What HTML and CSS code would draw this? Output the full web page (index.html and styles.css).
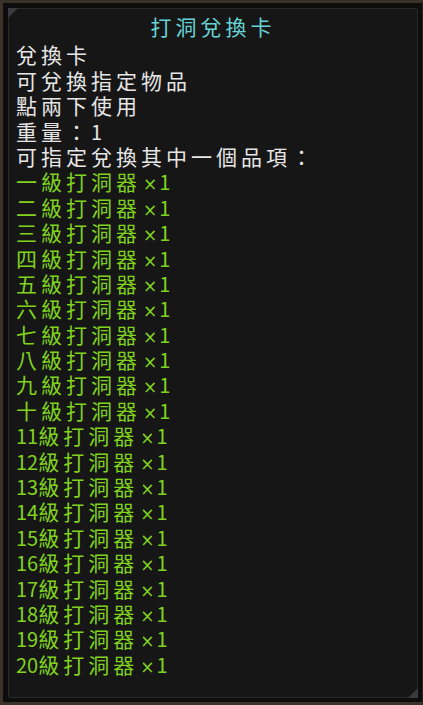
FILE: index.html
```html
<!DOCTYPE html>
<html lang="zh-Hant">
<head>
<meta charset="utf-8">
<title>打洞兌換卡</title>
<link rel="stylesheet" href="styles.css">
</head>
<body>
<div class="frame">
  <div class="gap">
    <div class="panel">
      <div class="title">打洞兌換卡</div>
      <div class="line">兌換卡</div>
      <div class="line">可兌換指定物品</div>
      <div class="line">點兩下使用</div>
      <div class="line">重量：<span class="n">1</span></div>
      <div class="line">可指定兌換其中一個品項：</div>
      <div class="line g">一級打洞器<span class="x">×</span><span class="n">1</span></div>
      <div class="line g">二級打洞器<span class="x">×</span><span class="n">1</span></div>
      <div class="line g">三級打洞器<span class="x">×</span><span class="n">1</span></div>
      <div class="line g">四級打洞器<span class="x">×</span><span class="n">1</span></div>
      <div class="line g">五級打洞器<span class="x">×</span><span class="n">1</span></div>
      <div class="line g">六級打洞器<span class="x">×</span><span class="n">1</span></div>
      <div class="line g">七級打洞器<span class="x">×</span><span class="n">1</span></div>
      <div class="line g">八級打洞器<span class="x">×</span><span class="n">1</span></div>
      <div class="line g">九級打洞器<span class="x">×</span><span class="n">1</span></div>
      <div class="line g">十級打洞器<span class="x">×</span><span class="n">1</span></div>
      <div class="line g"><span class="n">11</span>級打洞器<span class="x">×</span><span class="n">1</span></div>
      <div class="line g"><span class="n">12</span>級打洞器<span class="x">×</span><span class="n">1</span></div>
      <div class="line g"><span class="n">13</span>級打洞器<span class="x">×</span><span class="n">1</span></div>
      <div class="line g"><span class="n">14</span>級打洞器<span class="x">×</span><span class="n">1</span></div>
      <div class="line g"><span class="n">15</span>級打洞器<span class="x">×</span><span class="n">1</span></div>
      <div class="line g"><span class="n">16</span>級打洞器<span class="x">×</span><span class="n">1</span></div>
      <div class="line g"><span class="n">17</span>級打洞器<span class="x">×</span><span class="n">1</span></div>
      <div class="line g"><span class="n">18</span>級打洞器<span class="x">×</span><span class="n">1</span></div>
      <div class="line g"><span class="n">19</span>級打洞器<span class="x">×</span><span class="n">1</span></div>
      <div class="line g"><span class="n">20</span>級打洞器<span class="x">×</span><span class="n">1</span></div>
    </div>
  </div>
</div>
</body>
</html>
```

FILE: styles.css
```css
html, body {
  margin: 0;
  padding: 0;
  background: #0e0d0c;
}
body {
  width: 423px;
  height: 705px;
  overflow: hidden;
  font-family: "Noto Sans CJK TC", "Noto Sans CJK SC", sans-serif;
}
.frame {
  box-sizing: border-box;
  width: 423px;
  height: 705px;
  border-top: 3px solid #3a3128;
  border-left: 3px solid #3d3329;
  border-bottom: 3px solid #3a3128;
  border-right: 1px solid #2a241e;
}
.gap {
  box-sizing: border-box;
  height: 100%;
  padding: 5px 4px 4px 5px;
  background: #0d0d0d;
}
.panel {
  position: relative;
  box-sizing: border-box;
  height: 100%;
  background: #161616;
  border: 1px solid #2a2a2a;
  border-radius: 3px;
  padding: 5px 0 0 7px;
  color: #e6e6e6;
  font-size: 21px;
  letter-spacing: 4px;
  line-height: 25.4px;
}
.panel::before,
.panel::after {
  content: "";
  position: absolute;
  width: 0;
  height: 0;
}
.panel::before {
  top: -1px;
  left: -1px;
  border-top: 10px solid #3a3a3e;
  border-right: 10px solid transparent;
}
.panel::after {
  bottom: -1px;
  right: -1px;
  border-bottom: 10px solid #3a3a3e;
  border-left: 10px solid transparent;
}
.title {
  color: #66d4d4;
  text-align: center;
  margin-right: 7px;
  margin-bottom: 3px;
  height: 25.4px;
}
.line {
  white-space: nowrap;
  height: 25.4px;
}
.g {
  color: #80d21e;
}
.n {
  letter-spacing: 0;
  font-size: 20px;
}
.x {
  font-family: "DejaVu Sans", sans-serif;
  font-size: 17px;
  line-height: 1;
  letter-spacing: 2px;
  padding-left: 2px;
}
```
